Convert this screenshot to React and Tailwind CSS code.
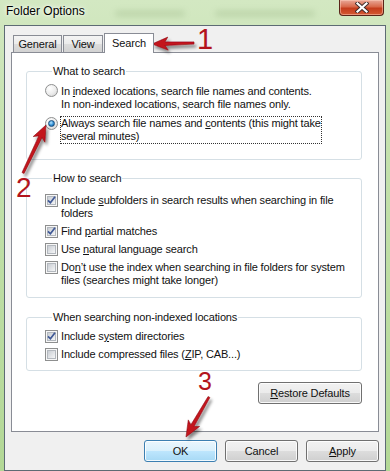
const arrowPoints = (x1, y1, x2, y2, w = 3.6, hl = 16, hw = 13) => {
  const dx = x2 - x1;
  const dy = y2 - y1;
  const len = Math.hypot(dx, dy);
  const ux = dx / len;
  const uy = dy / len;
  const px = -uy;
  const py = ux;
  const bx = x2 - ux * hl;
  const by = y2 - uy * hl;
  const nx = x2 - ux * (hl - 3);
  const ny = y2 - uy * (hl - 3);
  const pts = [
    [x1 + px * w * 0.3, y1 + py * w * 0.3],
    [nx + px * w * 0.5, ny + py * w * 0.5],
    [bx + px * hw * 0.5, by + py * hw * 0.5],
    [x2, y2],
    [bx - px * hw * 0.5, by - py * hw * 0.5],
    [nx - px * w * 0.5, ny - py * w * 0.5],
    [x1 - px * w * 0.3, y1 - py * w * 0.3],
  ];
  return pts.map((p) => p.map((v) => v.toFixed(1)).join(',')).join(' ');
};

const Check = ({ checked }) => (
  <span className="relative flex h-[13px] w-[13px] shrink-0 items-center justify-center border border-[#8e8f8f] bg-[#f7f7f7]">
    <span className="h-[9px] w-[9px] border border-[#b3b8be] bg-[linear-gradient(135deg,#c9cdd3,#f5f6f7)]" />
    {checked && (
      <svg className="absolute left-[-1px] top-[-1px]" width="13" height="13" viewBox="0 0 13 13">
        <path d="M3 6.3 L5.4 8.8 L10 2.8" fill="none" stroke="#3f5896" strokeWidth="1.7" />
      </svg>
    )}
  </span>
);

const Radio = ({ checked }) => (
  <span className="flex h-[13px] w-[13px] shrink-0 items-center justify-center rounded-full border border-[#8e8f8f] bg-[radial-gradient(circle_at_35%_30%,#ffffff,#ececec_55%,#cbcbcb)]">
    {checked && (
      <span className="h-[7px] w-[7px] rounded-full border border-[#1c4f7c] bg-[radial-gradient(circle_at_40%_35%,#b8e6ff,#2f8fd6_55%,#0c4478)]" />
    )}
  </span>
);

const CheckRow = ({ checked, children, className = '' }) => (
  <div className={`flex items-start ${className}`}>
    <Check checked={checked} />
    <span className="ml-[3px] whitespace-nowrap leading-[13px]">{children}</span>
  </div>
);

const Group = ({ title, className = '', children }) => (
  <fieldset className={`ml-[14px] mr-[16px] rounded-[3px] border border-[#d5dfe5] pl-[18px] ${className}`}>
    <legend className="ml-[7px] px-[1px] leading-[13px]">{title}</legend>
    {children}
  </fieldset>
);

const Button = ({ children, primary, className = '' }) => (
  <button
    className={`flex h-[22px] items-center justify-center rounded-[3px] border leading-[13px] shadow-[inset_0_0_0_1px_rgba(255,255,255,0.85)] ${
      primary
        ? 'border-[#3c7fb1] bg-[linear-gradient(180deg,#eaf6fd_0%,#d9f0fc_50%,#bee6fd_50%,#a7d9f5_100%)]'
        : 'border-[#707070] bg-[linear-gradient(180deg,#f2f2f2_0%,#ebebeb_50%,#dddddd_50%,#cfcfcf_100%)]'
    } ${className}`}
  >
    {children}
  </button>
);

const App = () => {
  return (
    <div className="relative h-[471px] w-[390px] overflow-hidden bg-[linear-gradient(180deg,#d3e8c2_0%,#c4e1ad_30%,#b3d896_100%)] text-[11px] tracking-[-0.15px] text-[#111] [font-family:'Liberation_Sans',Arial,sans-serif]">
      {/* title bar */}
      <div className="flex h-[25px] items-start justify-between">
        <div className="flex items-center gap-[30px] pl-[6px] pt-[4px]">
          <span className="shrink-0 whitespace-nowrap text-[12px] leading-[15px] tracking-normal text-black [text-shadow:0_0_7px_#ffffff,0_0_3px_#ffffff]">
            Folder Options
          </span>
          <span className="mt-[4px] h-[5px] w-[70px] shrink-0 rounded-full bg-[#6f8f5c] opacity-25 blur-[3px]" />
          <span className="mt-[4px] h-[5px] w-[100px] shrink-0 rounded-full bg-[#6f8f5c] opacity-25 blur-[3px]" />
        </div>
        <button className="mr-[6px] flex h-[16px] w-[45px] shrink-0 items-center justify-center rounded-b-[4px] border border-t-0 border-[#5a2418] bg-[linear-gradient(180deg,#e9a898_0%,#d8684a_45%,#c43c1c_55%,#d45a33_100%)] shadow-[inset_0_0_0_1px_rgba(255,210,190,0.5)]">
          <svg width="14" height="11" viewBox="0 0 14 11">
            <path d="M2.5 1.5 L11.5 9.5 M11.5 1.5 L2.5 9.5" stroke="#3b2b2b" strokeWidth="4" strokeLinecap="square" />
            <path d="M2.5 1.5 L11.5 9.5 M11.5 1.5 L2.5 9.5" stroke="#ffffff" strokeWidth="2.2" strokeLinecap="square" />
          </svg>
        </button>
      </div>

      {/* client area */}
      <div className="mx-[4px] flex h-[446px] flex-col border border-[#5d6b74] bg-[#f0f0f0] px-[6px]">
        {/* tabs */}
        <div className="flex items-end pl-[2px] pt-[7px]">
          <div className="flex h-[17px] w-[49px] items-center justify-center border border-b-0 border-[#898c95] bg-[linear-gradient(180deg,#f4f4f4_0%,#ebebeb_50%,#dddddd_50%,#d2d2d2_100%)] leading-[13px]">
            General
          </div>
          <div className="ml-[1px] flex h-[17px] w-[40px] items-center justify-center border border-b-0 border-[#898c95] bg-[linear-gradient(180deg,#f4f4f4_0%,#ebebeb_50%,#dddddd_50%,#d2d2d2_100%)] leading-[13px]">
            View
          </div>
          <div className="relative z-10 -mb-px ml-[1px] flex h-[20px] w-[50px] items-center justify-center border border-b-0 border-[#898c95] bg-white pb-[1px] leading-[13px]">
            Search
          </div>
        </div>

        {/* tab panel */}
        <div className="flex h-[380px] flex-col border border-[#898c95] bg-white">
          <Group title="What to search" className="mt-[12px] pb-[15px] pt-[6px]">
            <div className="flex items-start">
              <Radio />
              <span className="ml-[2px] border border-transparent leading-[13px]">
                In <u>i</u>ndexed locations, search file names and contents.
                <br />
                In non-indexed locations, search file names only.
              </span>
            </div>
            <div className="mt-[4px] flex items-start">
              <span className="mt-[1px]">
                <Radio checked />
              </span>
              <span className="ml-[2px] border border-dotted border-[#333] leading-[13px]">
                Always search file names and <u>c</u>ontents (this might take
                <br />
                several minutes)
              </span>
            </div>
          </Group>

          <Group title="How to search" className="mt-[12px] pb-[10px] pt-[9px]">
            <CheckRow checked>
              Include <u>s</u>ubfolders in search results when searching in file
              <br />
              folders
            </CheckRow>
            <CheckRow checked className="mt-[5px]">
              Find <u>p</u>artial matches
            </CheckRow>
            <CheckRow className="mt-[5px]">
              Use <u>n</u>atural language search
            </CheckRow>
            <CheckRow className="mt-[5px]">
              Do<u>n</u>’t use the index when searching in file folders for system
              <br />
              files (searches might take longer)
            </CheckRow>
          </Group>

          <Group title="When searching non-indexed locations" className="mt-[13px] pb-[9px] pt-[6px]">
            <CheckRow checked>
              Include s<u>y</u>stem directories
            </CheckRow>
            <CheckRow className="mt-[5px]">
              Include compressed files (<u>Z</u>IP, CAB...)
            </CheckRow>
          </Group>

          <div className="mr-[16px] mt-[11px] flex justify-end">
            <Button className="w-[104px]">
              <span>
                <u>R</u>estore Defaults
              </span>
            </Button>
          </div>
        </div>

        {/* dialog buttons */}
        <div className="mt-[8px] flex justify-end gap-[8px]">
          <Button primary className="w-[73px]">
            OK
          </Button>
          <Button className="w-[73px]">Cancel</Button>
          <Button className="w-[73px]">
            <span>
              <u>A</u>pply
            </span>
          </Button>
        </div>
      </div>

      {/* annotations */}
      <svg className="pointer-events-none absolute inset-0" width="390" height="471" viewBox="0 0 390 471">
        <defs>
          <filter id="shadow" x="-30%" y="-30%" width="160%" height="160%">
            <feDropShadow dx="2" dy="3" stdDeviation="1.8" floodColor="#000" floodOpacity="0.45" />
          </filter>
        </defs>
        <g filter="url(#shadow)" fill="#c3131d" stroke="#8e0c13" strokeWidth="0.6">
          <polygon points={arrowPoints(194, 43, 152, 44)} />
          <polygon points={arrowPoints(23, 173, 46, 125)} />
          <polygon points={arrowPoints(209, 397, 186, 437)} />
        </g>
      </svg>
      <span className="pointer-events-none absolute left-[197px] top-[25px] text-[29px] leading-none text-[#b3141c]">1</span>
      <span className="pointer-events-none absolute left-[16px] top-[174px] text-[28px] leading-none text-[#b3141c]">2</span>
      <span className="pointer-events-none absolute left-[198px] top-[369px] text-[25px] leading-none text-[#b3141c]">3</span>
    </div>
  );
};

export default App;
